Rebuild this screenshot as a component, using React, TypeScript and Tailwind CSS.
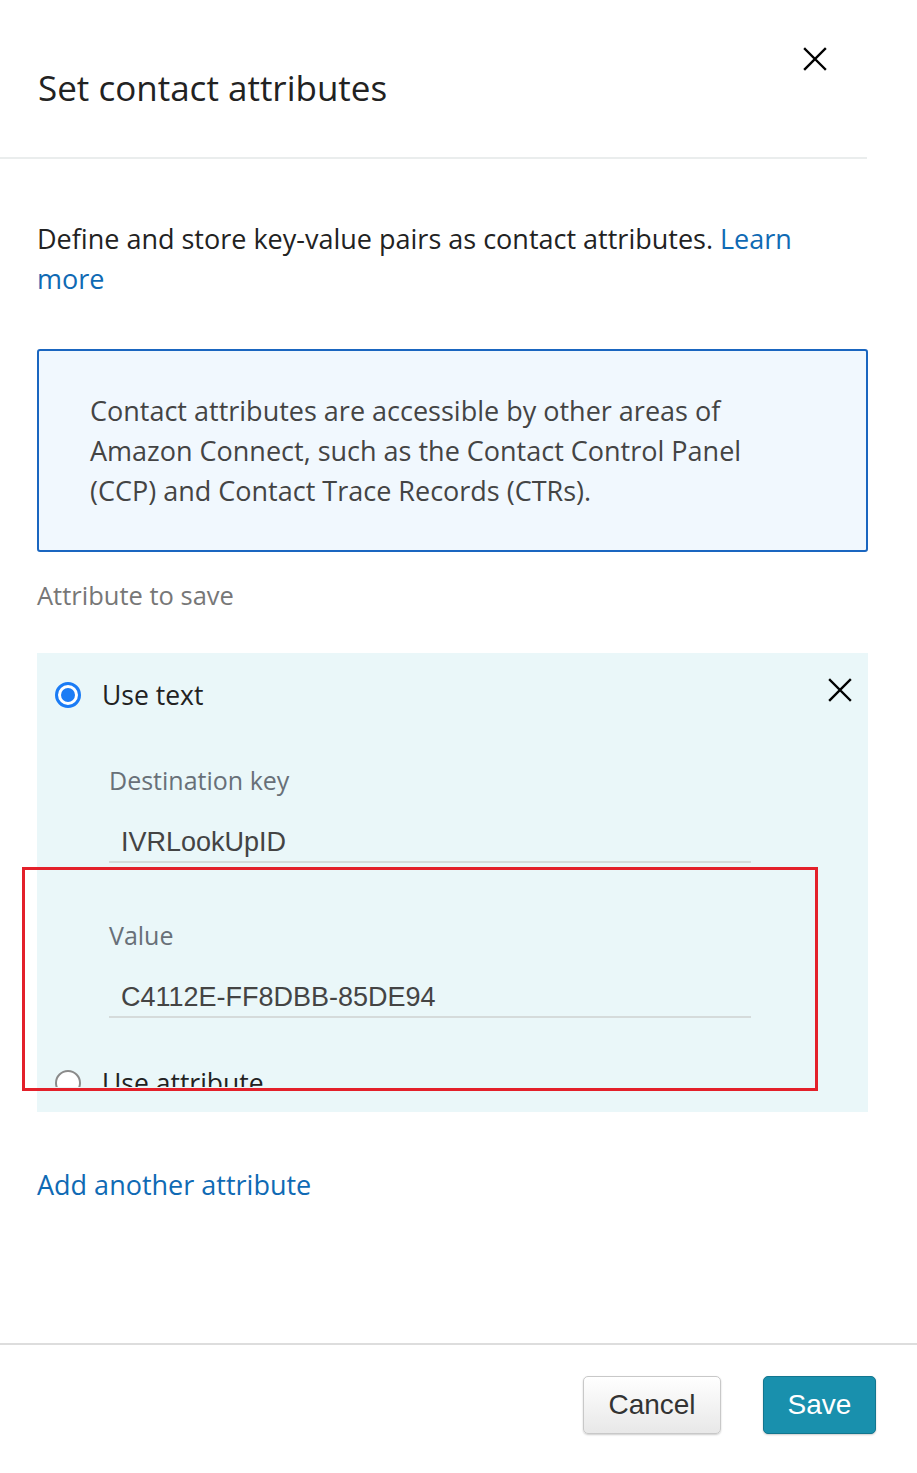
import React from "react";

function Radio({ checked }: { checked?: boolean }) {
  return checked ? (
    <span className="flex h-[26px] w-[26px] shrink-0 items-center justify-center rounded-full border-[3px] border-[#1b7cf5] bg-white">
      <span className="h-[14px] w-[14px] rounded-full bg-[#1b7cf5]" />
    </span>
  ) : (
    <span className="h-[26px] w-[26px] shrink-0 rounded-full border-2 border-[#8a8a8a] bg-white" />
  );
}

function CloseIcon({ size }: { size: number }) {
  return (
    <svg width={size} height={size} viewBox="0 0 24 24" fill="none" stroke="#000" strokeWidth={2.4} strokeLinecap="square">
      <path d="M2 2 L22 22 M22 2 L2 22" />
    </svg>
  );
}

function Field({ label, value }: { label: string; value: string }) {
  return (
    <div className="flex flex-col">
      <span className="text-[25px] leading-[30px] text-[#687078]">{label}</span>
      <div className="mt-[31px] w-[642px] border-b-2 border-[#d5dbdb] pb-[3px] pl-[12px] font-['Liberation_Sans',Arial,sans-serif] text-[27px] leading-[32px] text-[#444]">
        {value}
      </div>
    </div>
  );
}

export default function App() {
  return (
    <div className="flex h-[1473px] w-[917px] flex-col bg-white font-['Open_Sans',sans-serif] text-[#16191f]">
      {/* Header */}
      <div className="flex h-[159px] w-[867px] shrink-0 items-start justify-between border-b-2 border-[#eaeded] pl-[38px] pr-[40px]">
        <h1 className="mt-[65px] text-[35px] leading-[46px] font-normal text-[#222]">Set contact attributes</h1>
        <button className="mt-[47px]">
          <CloseIcon size={24} />
        </button>
      </div>

      {/* Body */}
      <div className="flex flex-1 flex-col pl-[37px] pr-[49px]">
        <p className="mt-[60px] max-w-[790px] text-[27px] leading-[40px] text-[#222]">
          Define and store key-value pairs as contact attributes.{" "}
          <a className="text-[#0f6ab4]">Learn more</a>
        </p>

        <div className="mt-[50px] h-[203px] rounded-[3px] border-2 border-[#1a66c0] bg-[#f1f8fe] pl-[51px] pr-[70px] pt-[40px] text-[27px] leading-[40px] text-[#444]">
          Contact attributes are accessible by other areas of Amazon Connect, such as the Contact Control Panel (CCP) and
          Contact Trace Records (CTRs).
        </div>

        <span className="mt-[26px] text-[25.5px] leading-[34px] text-[#777]">Attribute to save</span>

        {/* Attribute panel */}
        <div className="relative mt-[41px] h-[459px] bg-[#eaf7f9]">
          <div className="h-[434px] overflow-hidden">
            <div className="flex items-center justify-between pl-[18px] pr-[16px] pt-[26px]">
              <div className="flex items-center gap-[21px]">
                <Radio checked />
                <span className="text-[26.5px] leading-[32px] text-[#222]">Use text</span>
              </div>
              <span className="-mt-[10px]">
                <CloseIcon size={24} />
              </span>
            </div>
            <div className="mt-[54px] flex flex-col gap-[57px] pl-[72px]">
              <Field label="Destination key" value="IVRLookUpID" />
              <Field label="Value" value="C4112E-FF8DBB-85DE94" />
            </div>
            <div className="mt-[49px] flex items-center gap-[21px] pl-[18px]">
              <Radio />
              <span className="text-[26.5px] leading-[32px] text-[#222]">Use attribute</span>
            </div>
          </div>
          {/* highlight overlay */}
          <div className="absolute left-[-15px] top-[214px] h-[224px] w-[796px] border-[3px] border-[#e3202a]" />
        </div>

        <a className="mt-[57px] text-[27px] leading-[32px] text-[#0f6ab4]">Add another attribute</a>
      </div>

      {/* Footer */}
      <div className="flex h-[130px] shrink-0 items-start justify-end gap-[42px] border-t-2 border-[#ddd] pr-[41px] pt-[31px] font-['Liberation_Sans',Arial,sans-serif]">
        <button className="h-[58px] w-[138px] rounded-[5px] border border-[#c8c8c8] bg-gradient-to-b from-white to-[#e8e8e8] text-[28px] text-[#333] shadow-[0_1px_2px_rgba(0,0,0,0.2)]">
          Cancel
        </button>
        <button className="h-[58px] w-[113px] rounded-[5px] border border-[#12768f] bg-[#1990ad] text-[28px] text-white shadow-[0_1px_2px_rgba(0,0,0,0.2)]">
          Save
        </button>
      </div>
    </div>
  );
}
